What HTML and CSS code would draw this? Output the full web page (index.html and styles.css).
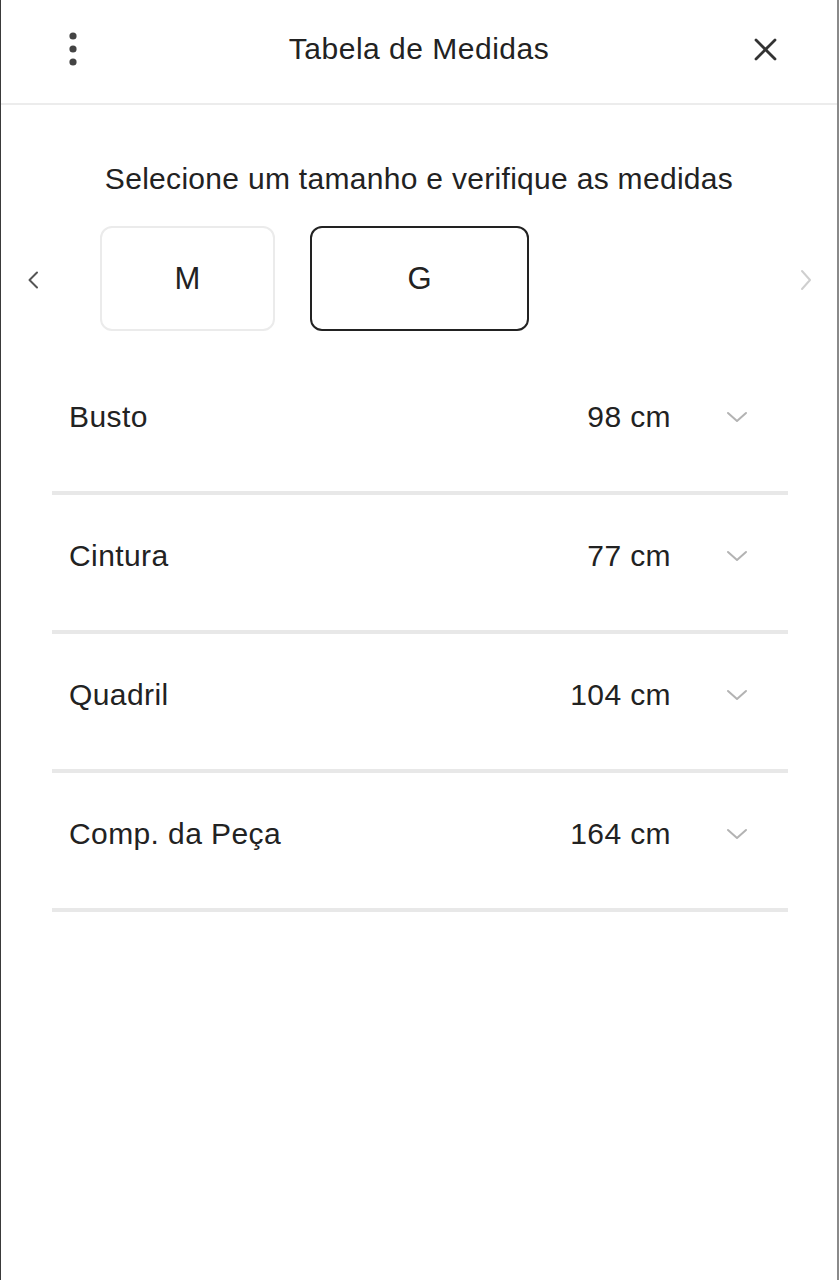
FILE: index.html
```html
<!DOCTYPE html>
<html lang="pt-BR">
<head>
<meta charset="utf-8">
<title>Tabela de Medidas</title>
<link rel="stylesheet" href="styles.css">
</head>
<body>
<div class="screen">
  <header class="header">
    <span class="icon-btn">
      <svg width="24" height="36" viewBox="0 0 24 36"><circle cx="12" cy="5" r="3.6" fill="#444"/><circle cx="12" cy="18" r="3.6" fill="#444"/><circle cx="12" cy="31" r="3.6" fill="#444"/></svg>
    </span>
    <h1 class="title">Tabela de Medidas</h1>
    <span class="icon-btn">
      <svg width="24" height="24" viewBox="0 0 24 24"><path d="M3 3 L22 22 M22 3 L3 22" stroke="#333" stroke-width="2.8" stroke-linecap="round" fill="none"/></svg>
    </span>
  </header>

  <p class="subtitle">Selecione um tamanho e verifique as medidas</p>

  <div class="sizes">
    <svg class="arrow" width="12" height="18" viewBox="0 0 12 18"><path d="M10 1.5 L2.5 9 L10 16.5" stroke="#555" stroke-width="2" fill="none" stroke-linecap="round" stroke-linejoin="round"/></svg>
    <div class="size-list">
      <button class="size">M</button>
      <button class="size size-active">G</button>
    </div>
    <svg class="arrow arrow-right" width="12" height="22" viewBox="0 0 12 22"><path d="M2 2 L10 11 L2 20" stroke="#cfcfcf" stroke-width="2" fill="none" stroke-linecap="round" stroke-linejoin="round"/></svg>
  </div>

  <ul class="measures">
    <li class="row"><span class="label">Busto</span><span class="value">98 cm</span><svg class="chev" width="22" height="12" viewBox="0 0 22 12"><path d="M2 2 L11 10 L20 2" stroke="#b3b3b3" stroke-width="2" fill="none" stroke-linecap="round" stroke-linejoin="round"/></svg></li>
    <li class="row"><span class="label">Cintura</span><span class="value">77 cm</span><svg class="chev" width="22" height="12" viewBox="0 0 22 12"><path d="M2 2 L11 10 L20 2" stroke="#b3b3b3" stroke-width="2" fill="none" stroke-linecap="round" stroke-linejoin="round"/></svg></li>
    <li class="row"><span class="label">Quadril</span><span class="value">104 cm</span><svg class="chev" width="22" height="12" viewBox="0 0 22 12"><path d="M2 2 L11 10 L20 2" stroke="#b3b3b3" stroke-width="2" fill="none" stroke-linecap="round" stroke-linejoin="round"/></svg></li>
    <li class="row"><span class="label">Comp. da Peça</span><span class="value">164 cm</span><svg class="chev" width="22" height="12" viewBox="0 0 22 12"><path d="M2 2 L11 10 L20 2" stroke="#b3b3b3" stroke-width="2" fill="none" stroke-linecap="round" stroke-linejoin="round"/></svg></li>
  </ul>
</div>
</body>
</html>
```
FILE: styles.css
```css
* { box-sizing: border-box; }
html, body { margin: 0; padding: 0; background: #fff; }
body {
  font-family: "Liberation Sans", Arial, sans-serif;
  color: #222;
}
.screen {
  width: 839px;
  min-height: 1280px;
  border-left: 1px solid #3a3a3a;
  border-right: 2px solid #8a8a8a;
  background: #fff;
}
.header {
  height: 105px;
  border-bottom: 2px solid #ececec;
  display: flex;
  align-items: center;
  justify-content: space-between;
  padding: 0 60px 5px 60px;
}
.icon-btn { display: flex; width: 24px; justify-content: center; }
.title {
  margin: 0;
  font-size: 30px;
  letter-spacing: 0.5px;
  font-weight: 400;
  color: #222;
}
.subtitle {
  margin: 56px 0 0 0;
  text-align: center;
  font-size: 30px;
  letter-spacing: 0.3px;
  line-height: 36px;
  color: #222;
}
.sizes {
  margin-top: 29px;
  display: flex;
  align-items: center;
  padding: 0 25px 0 26px;
}
.arrow { display: block; margin-top: 2px; }
.arrow-right { margin-left: auto; }
.size-list {
  display: flex;
  gap: 35px;
  margin-left: 61px;
}
.size {
  height: 105px;
  width: 175px;
  border: 2px solid #ebebeb;
  border-radius: 12px;
  background: #fff;
  font-family: "Liberation Sans", Arial, sans-serif;
  font-size: 31px;
  color: #222;
  padding: 0;
}
.size-active {
  width: 219px;
  border-color: #222;
}
.measures {
  list-style: none;
  margin: 25px 49px 0 51px;
  padding: 0;
}
.row {
  display: flex;
  align-items: center;
  padding: 43px 40px 56px 17px;
  border-bottom: 4px solid #e8e8e8;
  font-size: 30px;
  letter-spacing: 0.4px;
  line-height: 36px;
}
.label { flex: 1; }
.value { margin-right: 55px; }
.chev { display: block; }
```
